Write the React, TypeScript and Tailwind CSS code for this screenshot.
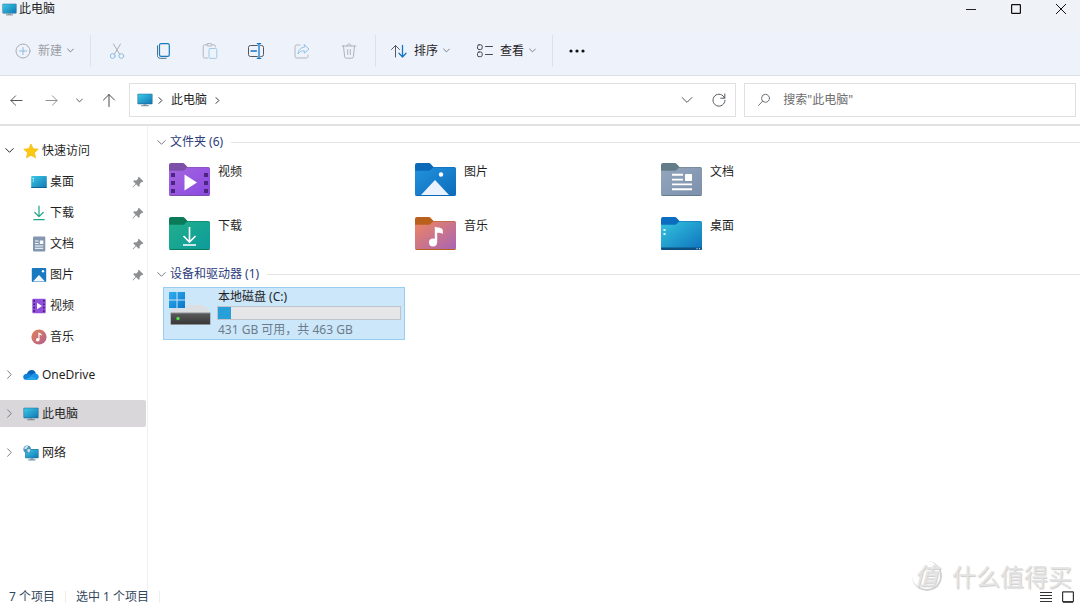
import type { ReactNode } from "react";

type IconProps = { className?: string };

function Chevron({ dir = "down", className = "h-2 w-2" }: { dir?: "down" | "right"; className?: string }) {
  return (
    <svg viewBox="0 0 8 8" className={`shrink-0 ${className}`} fill="none" stroke="currentColor" strokeWidth="1" strokeLinecap="round" strokeLinejoin="round">
      <path vectorEffect="non-scaling-stroke" d={dir === "down" ? "M0.7 2.3 L4 5.6 L7.3 2.3" : "M2.3 0.7 L5.6 4 L2.3 7.3"} />
    </svg>
  );
}

function MonitorIcon({ className = "h-4 w-4" }: IconProps) {
  return (
    <svg viewBox="0 0 16 16" className={`shrink-0 ${className}`}>
      <defs>
        <linearGradient id="screen" x1="0" y1="0" x2="1" y2="1">
          <stop offset="0" stopColor="#3bc9e6" />
          <stop offset="1" stopColor="#1277b4" />
        </linearGradient>
      </defs>
      <rect x="0.5" y="1.8" width="15" height="10.4" rx="0.8" fill="#1b6d96" />
      <rect x="1.1" y="2.3" width="13.8" height="9.3" rx="0.4" fill="url(#screen)" />
      <path d="M6.5 12.2h3v1.2h-3z" fill="#8798a3" />
      <path d="M4.2 13.3h7.6v0.9H4.2z" fill="#5d7886" />
    </svg>
  );
}

function NetworkIcon() {
  return (
    <svg viewBox="0 0 16 16" className="h-4 w-4 shrink-0">
      <rect x="2.2" y="4" width="13.4" height="9.2" rx="0.8" fill="#1b6d96" />
      <rect x="2.8" y="4.5" width="12.2" height="8.2" rx="0.4" fill="url(#screen)" />
      <path d="M7.5 13.2h3v1.2h-3z" fill="#8798a3" />
      <path d="M5.4 14.4h7v1h-7z" fill="#4a7486" />
      <circle cx="4.2" cy="4.2" r="3.8" fill="#4a94bd" />
      <path d="M1 3.2c1-2 3-2.4 4-2 .4 1-1 1.300-1.300 2.300-.5 1-1.700.6-2.700-.3zM4.600 4.300c1.200-.5 2.400 0 2.900.6-.5 1.500-1.400 2.300-2.400 2.500-.6-1-.9-2-.5-3.100z" fill="#cfe6ef" />
    </svg>
  );
}

function StarIcon() {
  return (
    <svg viewBox="0 0 16 16" className="h-4 w-4 shrink-0">
      <path d="M8 1l2.100 4.700 5.100.5-3.800 3.500 1.100 5.100L8 12.200l-4.500 2.600 1.100-5.100L.8 6.200l5.100-.5z" fill="#fcc810" stroke="#f3b50c" strokeWidth="0.700" strokeLinejoin="round" />
    </svg>
  );
}

function CloudIcon() {
  return (
    <svg viewBox="0 0 16 16" className="h-4 w-4 shrink-0">
      <path d="M3.800 7.200C4.600 4.200 7 2.900 9 3.100c2 .2 3.300 1.600 3.800 3.300L9 9.500z" fill="#0a63b8" />
      <path d="M3.600 6.800c1.800-.6 3.200 0 4.400.8l5.500 3.400-2.200 2H3.600C1.600 13 .2 11.600.2 9.900c0-1.700 1.500-3 3.400-3.100z" fill="#1080d8" />
      <path d="M8.400 8.200c1.200-1.400 2.700-2 4.200-1.800 2 .2 3.200 1.700 3.200 3.400 0 1.800-1.300 3.200-3 3.200H5z" fill="#1b93e6" />
      <path d="M2 12.300l6.700-2.900 5.800 3c-.5.400-1.100.6-1.700.6H3.600c-.6 0-1.200-.3-1.600-.7z" fill="#28a8ea" />
    </svg>
  );
}

function DesktopIcon() {
  return (
    <svg viewBox="0 0 16 16" className="h-4 w-4 shrink-0">
      <rect x="0.200" y="2" width="15.600" height="12" rx="1" fill="url(#screen)" />
      <path d="M1.700 4h1.200v1.200H1.700zM1.700 6.400h1.200v1.200H1.700z" fill="#e6fbff" />
      <path d="M.2 12.900h15.600v.3a.8.8 0 0 1-.8.800H1a.8.8 0 0 1-.8-.8z" fill="#11628f" />
    </svg>
  );
}

function DownloadIcon() {
  return (
    <svg viewBox="0 0 16 16" className="h-4 w-4 shrink-0" fill="none" stroke="#21a588" strokeWidth="1.200" strokeLinecap="round" strokeLinejoin="round">
      <path d="M8 1v10.500M3.800 7.500L8 11.700l4.200-4.200M2.800 14.700h10.400" />
    </svg>
  );
}

function DocumentIcon() {
  return (
    <svg viewBox="0 0 16 16" className="h-4 w-4 shrink-0">
      <rect x="2" y="0.500" width="12.300" height="15" rx="1" fill="#8497b0" />
      <path d="M4 5h3.500M4 7.600h3.500M4 10h8.200M4 12.300h8.200" stroke="#fff" strokeWidth="1" />
      <rect x="8.800" y="4.500" width="3.500" height="3.500" fill="#fff" />
    </svg>
  );
}

function PictureIcon() {
  return (
    <svg viewBox="0 0 16 16" className="h-4 w-4 shrink-0">
      <rect x="0.800" y="1" width="14.400" height="14" rx="1" fill="#1878c0" />
      <path d="M2 14.500L8 8l6 6.500z" fill="#f3f8ff" />
      <circle cx="12" cy="4.200" r="1.200" fill="#fff" />
    </svg>
  );
}

function VideoIcon() {
  return (
    <svg viewBox="0 0 16 16" className="h-4 w-4 shrink-0">
      <rect x="1.300" y="0.700" width="13.400" height="14.600" rx="1" fill="#9150dc" />
      <path d="M2.300 2h1.700v1.700H2.300zM2.300 5.400h1.700v1.700H2.300zM2.300 8.800h1.700v1.700H2.300zM2.300 12.200h1.700v1.700H2.300zM12 2h1.700v1.700H12zM12 5.400h1.700v1.700H12zM12 8.800h1.700v1.700H12zM12 12.200h1.700v1.700H12z" fill="#482078" />
      <path d="M6 4.800l5 3.200-5 3.200z" fill="#fff" />
    </svg>
  );
}

function MusicIcon() {
  return (
    <svg viewBox="0 0 16 16" className="h-4 w-4 shrink-0">
      <defs>
        <linearGradient id="disc" x1="0" y1="0" x2="1" y2="1">
          <stop offset="0" stopColor="#e08257" />
          <stop offset="1" stopColor="#b35f8e" />
        </linearGradient>
      </defs>
      <circle cx="8" cy="8" r="7.600" fill="url(#disc)" />
      <circle cx="6.700" cy="10.800" r="1.800" fill="#fff" />
      <path d="M7.400 10.800V3.200c1 1 3 1 3.400 2.600v1.200C10 6 9.300 6 8.500 5.800v5z" fill="#fff" />
    </svg>
  );
}

function PinIcon() {
  return (
    <svg viewBox="0 0 12 12" className="h-3 w-3 shrink-0">
      <path d="M6.800.8l4.600 4.400-.9.800-.9-.1-2 2 .1 2-1 .9-2.500-2.500L1 11.400l-.5-.5L3.600 7.700 1.200 5.300l1-1 2.100.1 1.900-1.900-.2-.9z" fill="#8d9093" />
    </svg>
  );
}

type FolderKind = "video" | "picture" | "document" | "download" | "music" | "desktop";

const folderColors: Record<FolderKind, [string, string, string]> = {
  video: ["#7d4fa8", "#a566e0", "#8a48e0"],
  picture: ["#0a6ab8", "#2392dc", "#0b6cbc"],
  document: ["#637d88", "#93a6bd", "#7d90ac"],
  download: ["#0b7a58", "#20b08a", "#0e9a9c"],
  music: ["#b8601c", "#ee8560", "#a764b6"],
  desktop: ["#0b6cc0", "#35c4de", "#0d72bd"],
};

const folderGlyphs: Record<FolderKind, ReactNode> = {
  video: (
    <>
      <path d="M2 10h4v4H2zM2 18h4v4H2zM2 26h4v4H2zM35 10h4v4h-4zM35 18h4v4h-4zM35 26h4v4h-4z" fill="#4c2582" />
      <path d="M15.500 11.500v16L28 19.500z" fill="#fff" />
    </>
  ),
  picture: (
    <>
      <path d="M6 32L20 17l14 15z" fill="#eaf1ff" />
      <circle cx="26" cy="11.500" r="2.200" fill="#fff" />
    </>
  ),
  document: (
    <>
      <path d="M11 11.800h11M11 16.600h11M11 21.400h20M11 26.200h20" stroke="#fff" strokeWidth="1.900" />
      <rect x="24" y="11" width="7" height="7" rx="0.800" fill="#fff" />
    </>
  ),
  download: <path d="M20.500 10v15M14.500 19l6 6 6-6M14 28h13" fill="none" stroke="#fff" strokeWidth="1.600" />,
  music: (
    <>
      <circle cx="18" cy="25.500" r="4" fill="#fff" />
      <path d="M19.800 25.500V9.500c2.200 1.600 6.600.2 8 3.600v4c-1.600-1.400-3.600-1-5.600-1.300v9.700z" fill="#fff" />
    </>
  ),
  desktop: (
    <>
      <path d="M2.500 12h2v2h-2zM2.500 16h2v2h-2z" fill="#e2fbff" />
      <path d="M0 30.500h41v1a1.500 1.500 0 0 1-1.500 1.500h-38A1.500 1.500 0 0 1 0 31.500z" fill="#0c4f80" />
      <path d="M35.500 31.200h1.200v1h-1.200zM38 31.200h1.200v1H38z" fill="#d8f4ff" />
    </>
  ),
};

function FolderIcon({ kind }: { kind: FolderKind }) {
  const [tab, from, to] = folderColors[kind];
  return (
    <svg viewBox="0 0 41 33" className="h-[33px] w-[41px] shrink-0">
      <defs>
        <linearGradient id={`folder-${kind}`} x1="0" y1="0" x2="1" y2="1">
          <stop offset="0" stopColor={from} />
          <stop offset="1" stopColor={to} />
        </linearGradient>
      </defs>
      <path d="M0 2a2 2 0 0 1 2-2h11.500c1 0 1.500.300 2.200 1L18.500 4H39a2 2 0 0 1 2 2v6H0z" fill={tab} />
      <path d="M0 7.800h13.500c1 0 1.600-.3 2.300-1l1.600-1.600c.5-.5.900-.7 1.600-.7h20A2 2 0 0 1 41 6.500V31a2 2 0 0 1-2 2H2a2 2 0 0 1-2-2z" fill={`url(#folder-${kind})`} />
      <path d="M0 30.900V31a2 2 0 0 0 2 2h37a2 2 0 0 0 2-2v-.1a2 2 0 0 1-2 1.200H2a2 2 0 0 1-2-1.200z" fill={tab} />
      {folderGlyphs[kind]}
    </svg>
  );
}

function DriveIcon() {
  return (
    <svg viewBox="0 0 42 34" className="h-[34px] w-[42px] shrink-0">
      <defs>
        <linearGradient id="win" x1="0" y1="0" x2="1" y2="1">
          <stop offset="0" stopColor="#2fb0ee" />
          <stop offset="1" stopColor="#0b74c8" />
        </linearGradient>
        <linearGradient id="drive" x1="0" y1="0" x2="0" y2="1">
          <stop offset="0" stopColor="#5a5a5a" />
          <stop offset="1" stopColor="#383838" />
        </linearGradient>
      </defs>
      <path d="M5 13h27c2 0 3.300.7 4.600 2.200l4.900 5.800H1.500z" fill="#dcdfe2" />
      <path d="M0 0h16.500v16.500H0z" fill="#cce6fa" />
      <path d="M0 0h7.500v7.500H0zM8.500 0H16v7.500H8.500zM0 8.500h7.500V16H0zM8.500 8.500H16V16H8.500z" fill="url(#win)" />
      <rect x="1.500" y="20.500" width="40" height="12.500" rx="0.800" fill="#8b9094" />
      <rect x="2" y="21.500" width="39" height="10.500" fill="url(#drive)" />
      <circle cx="9" cy="26.500" r="1.700" fill="#4fe04a" />
    </svg>
  );
}

const line = { fill: "none", strokeWidth: 1, strokeLinecap: "round", strokeLinejoin: "round" } as const;

const toolIcons: { label: string; disabled: boolean; icon: ReactNode }[] = [
  {
    label: "剪切",
    disabled: true,
    icon: (
      <g {...line}>
        <path d="M4.500 1l6.300 10.500M11.500 1L5.200 11.500" stroke="#a9adb3" />
        <circle cx="3.700" cy="13" r="2.400" stroke="#8dbfe0" />
        <circle cx="12.300" cy="13" r="2.400" stroke="#8dbfe0" />
      </g>
    ),
  },
  {
    label: "复制",
    disabled: false,
    icon: (
      <g {...line}>
        <rect x="3.500" y="0.700" width="9.800" height="12.600" rx="1.600" stroke="#1879bd" strokeWidth="1.200" />
        <path d="M1.500 2.800v9.700c0 1.700 1 2.800 2.700 2.800h6" stroke="#4c7187" />
      </g>
    ),
  },
  {
    label: "粘贴",
    disabled: true,
    icon: (
      <g {...line}>
        <path d="M5.500 15H2.700A1.500 1.500 0 0 1 1.200 13.500V3.300a1.500 1.500 0 0 1 1.500-1.500H5M10 1.800h1.800a1.500 1.500 0 0 1 1.500 1.500v.7" stroke="#b3b7bc" />
        <rect x="4.800" y="0.600" width="5.200" height="2.400" rx="1.200" stroke="#b3b7bc" />
        <rect x="7" y="5.500" width="7.800" height="9.900" rx="1.200" stroke="#9fcbe4" />
      </g>
    ),
  },
  {
    label: "重命名",
    disabled: false,
    icon: (
      <g {...line}>
        <path d="M9.300 2.500H2.500a2 2 0 0 0-2 2v7a2 2 0 0 0 2 2h6.800M12.700 2.500h.8a2 2 0 0 1 2 2v7a2 2 0 0 1-2 2h-.8" stroke="#50565c" />
        <path d="M9.300.6h3.400M11 .6v14.800M9.300 15.400h3.400M3 8h5.500" stroke="#1476c4" strokeWidth="1.300" />
      </g>
    ),
  },
  {
    label: "共享",
    disabled: true,
    icon: (
      <g {...line}>
        <path d="M6 2H2.700A1.700 1.700 0 0 0 1 3.700v9.600A1.700 1.700 0 0 0 2.700 15h9.600a1.700 1.700 0 0 0 1.700-1.700V12" stroke="#b3b7bc" />
        <path d="M10.300 1.700L15 6l-4.700 4.200V7.800C7.600 7.700 5.800 8.600 4 11c.3-4 2.500-6.500 6.300-6.900z" stroke="#93c2e6" />
      </g>
    ),
  },
  {
    label: "删除",
    disabled: true,
    icon: (
      <g {...line} stroke="#aeb2b8">
        <path d="M1.200 3h13.600M6 2.800c0-2.600 4-2.600 4 0M2.500 3l1.100 10.700a1.700 1.700 0 0 0 1.700 1.500h5.400a1.700 1.700 0 0 0 1.700-1.500L13.500 3M6.700 6.500v5M9.300 6.500v5" />
      </g>
    ),
  },
];

function Divider() {
  return <span className="h-8 w-px shrink-0 bg-[#dde1e8]" />;
}

function ToolMenu({ icon, label, muted }: { icon: ReactNode; label: string; muted?: boolean }) {
  return (
    <button type="button" className={`flex h-8 shrink-0 items-center px-2 ${muted ? "text-[#9a9ea5]" : "text-[#1f2328]"}`}>
      {icon}
      <span className="ml-1.5 mr-[5px]">{label}</span>
      <Chevron className="h-[7px] w-[7px] text-[#7b8087]" />
    </button>
  );
}

const quickItems: { label: string; icon: ReactNode; pinned: boolean }[] = [
  { label: "桌面", icon: <DesktopIcon />, pinned: true },
  { label: "下载", icon: <DownloadIcon />, pinned: true },
  { label: "文档", icon: <DocumentIcon />, pinned: true },
  { label: "图片", icon: <PictureIcon />, pinned: true },
  { label: "视频", icon: <VideoIcon />, pinned: false },
  { label: "音乐", icon: <MusicIcon />, pinned: false },
];

const roots: { label: string; icon: ReactNode; selected: boolean }[] = [
  { label: "OneDrive", icon: <CloudIcon />, selected: false },
  { label: "此电脑", icon: <MonitorIcon />, selected: true },
  { label: "网络", icon: <NetworkIcon />, selected: false },
];

const folders: { label: string; kind: FolderKind }[] = [
  { label: "视频", kind: "video" },
  { label: "图片", kind: "picture" },
  { label: "文档", kind: "document" },
  { label: "下载", kind: "download" },
  { label: "音乐", kind: "music" },
  { label: "桌面", kind: "desktop" },
];

function GroupHeader({ title }: { title: string }) {
  return (
    <h2 className="flex h-5 items-center text-[#2c3c7c]">
      <Chevron className="mr-1 h-[9px] w-[9px] text-[#777c85]" />
      <span>{title}</span>
      <span className="ml-2 h-px flex-1 bg-[#e4e3e6]" />
    </h2>
  );
}

export default function App() {
  const used = ((463 - 431) / 463) * 100;

  return (
    <div className="relative flex min-h-screen flex-col bg-white font-['Noto_Sans','Noto_Sans_CJK_SC',sans-serif] text-xs text-[#1f1f1f]">
      <header className="flex h-8 items-start justify-between bg-[#eff3f8]">
        <div className="flex h-[18px] items-center gap-0.5 pl-0.5">
          <MonitorIcon className="h-[15px] w-[15px]" />
          <h1>此电脑</h1>
        </div>
        <div className="flex h-[18px]">
          <button type="button" aria-label="最小化" className="flex w-[45px] items-center justify-center">
            <svg viewBox="0 0 10 10" className="h-2.5 w-2.5" stroke="#222"><path d="M0 5.500h10" /></svg>
          </button>
          <button type="button" aria-label="最大化" className="flex w-[45px] items-center justify-center">
            <svg viewBox="0 0 10 10" className="h-2.5 w-2.5" fill="none" stroke="#111" strokeWidth="1.200"><rect x="0.600" y="0.600" width="8.800" height="8.800" rx="0.600" /></svg>
          </button>
          <button type="button" aria-label="关闭" className="flex w-[42px] items-center justify-center pl-1">
            <svg viewBox="0 0 10 10" className="h-2.5 w-2.5" stroke="#111"><path d="M0 0l10 10M10 0L0 10" /></svg>
          </button>
        </div>
      </header>

      <div className="flex h-11 items-center border-b border-[#d9dfe3] bg-[#eef2fb] pb-1.5 pl-[7px]">
        <ToolMenu
          muted
          label="新建"
          icon={
            <svg viewBox="0 0 16 16" className="mr-px h-4 w-4" {...line}>
              <circle cx="8" cy="8" r="7" stroke="#a9aeb6" />
              <path d="M8 4.500v7M4.500 8h7" stroke="#8dbbdf" />
            </svg>
          }
        />
        <span className="w-2" />
        <Divider />
        <div className="mx-[3px] flex w-[278px]">
          {toolIcons.map((t) => (
            <button key={t.label} type="button" aria-label={t.label} disabled={t.disabled} className="flex h-8 flex-1 items-center justify-center">
              <svg viewBox="0 0 16 16" className="h-4 w-4 overflow-visible">{t.icon}</svg>
            </button>
          ))}
        </div>
        <Divider />
        <span className="w-1.5" />
        <ToolMenu
          label="排序"
          icon={
            <svg viewBox="0 0 18 16" className="h-4 w-[18px]" {...line}>
              <path d="M5.500 14V2.500M1.500 6.500l4-4 4 4" stroke="#555b61" />
              <path d="M12.500 2.500V14M9 10.300l3.500 3.700 3.500-3.700" stroke="#1476c4" strokeWidth="1.300" />
            </svg>
          }
        />
        <span className="w-2.5" />
        <ToolMenu
          label="查看"
          icon={
            <svg viewBox="0 0 18 16" className="h-4 w-[18px]" {...line} stroke="#464b50">
              <rect x="1.500" y="1.800" width="4.700" height="4.700" rx="1.500" />
              <rect x="1.500" y="9" width="4.700" height="4.700" rx="1.500" />
              <path d="M9.500 3.500h7M9.500 11.500h7" />
            </svg>
          }
        />
        <span className="w-2" />
        <Divider />
        <button type="button" aria-label="更多" className="ml-2 flex h-8 w-8 items-center justify-center">
          <svg viewBox="0 0 16 4" className="h-1 w-4" fill="#111">
            <circle cx="2" cy="2" r="1.600" /><circle cx="8" cy="2" r="1.600" /><circle cx="14" cy="2" r="1.600" />
          </svg>
        </button>
      </div>

      <div className="flex h-[50px] items-center border-b-2 border-[#e2e2e4] pr-1 text-[#55595e]">
        <nav className="flex w-[129px] shrink-0 items-center pl-2">
          <button type="button" aria-label="后退" className="flex w-4 justify-center">
            <svg viewBox="0 0 14 14" className="h-[13px] w-[13px]" {...line} stroke="#45494d"><path d="M13 7H1M6 2L1 7l5 5" /></svg>
          </button>
          <button type="button" aria-label="前进" className="ml-[19px] flex w-4 justify-center">
            <svg viewBox="0 0 14 14" className="h-[13px] w-[13px]" {...line} stroke="#85898d"><path d="M1 7h12M8 2l5 5-5 5" /></svg>
          </button>
          <button type="button" aria-label="最近位置" className="ml-3 flex w-4 justify-center">
            <Chevron className="h-[7px] w-[7px]" />
          </button>
          <button type="button" aria-label="向上" className="ml-3.5 flex w-4 justify-center">
            <svg viewBox="0 0 14 14" className="h-3.5 w-3.5" {...line} stroke="#45494d"><path d="M7 13.500V1.500M1.500 7L7 1.500 12.500 7" /></svg>
          </button>
        </nav>
        <div className="flex h-[34px] flex-[591] items-center border border-[#e2dfe3] pl-[7px] pr-1">
          <MonitorIcon />
          <Chevron dir="right" className="ml-1 h-[7px] w-[7px] text-[#333]" />
          <span className="mx-[7px] text-[#1f1f1f]">此电脑</span>
          <Chevron dir="right" className="h-[7px] w-[7px] text-[#333]" />
          <button type="button" aria-label="展开" className="ml-auto flex h-6 w-6 items-center justify-center">
            <Chevron className="h-3 w-3" />
          </button>
          <button type="button" aria-label="刷新" className="ml-2 flex h-6 w-6 items-center justify-center">
            <svg viewBox="0 0 14 14" className="h-3.5 w-3.5" {...line} stroke="#55595e"><path d="M12.600 5A6 6 0 1 0 13 7.300M12.800 1v4.200H8.700" /></svg>
          </button>
        </div>
        <label className="ml-2 flex h-[34px] flex-[316] items-center border border-[#e2dfe3] pl-3">
          <svg viewBox="0 0 14 14" className="h-3.5 w-3.5 shrink-0" {...line} stroke="#6f7378"><circle cx="8.500" cy="5.300" r="4" /><path d="M5.600 8.200L1.500 12.500" /></svg>
          <input type="search" aria-label="搜索" placeholder={'搜索"此电脑"'} className="ml-3 min-w-0 flex-1 bg-transparent outline-none placeholder:text-[#6d6d6d]" />
        </label>
      </div>

      <div className="flex flex-1">
        <aside className="w-[148px] shrink-0 border-r border-[#f1f0f3] pt-[9px]">
          <button type="button" className="flex h-[31px] w-full items-center pl-[5px]">
            <Chevron className="h-[9px] w-[9px] text-[#222]" />
            <span className="ml-[9px] flex items-center gap-[3px]"><StarIcon /><span className="pt-px">快速访问</span></span>
          </button>
          <ul>
            {quickItems.map((q) => (
              <li key={q.label}>
                <a href="#" className="flex h-[31px] items-center gap-[3px] pl-[31px] pr-[3px]">
                  {q.icon}
                  <span className="flex-1 pt-px">{q.label}</span>
                  {q.pinned && <PinIcon />}
                </a>
              </li>
            ))}
          </ul>
          <ul className="mt-[9px] flex flex-col gap-3">
            {roots.map((r) => (
              <li key={r.label}>
                <a href="#" className={`mr-px flex h-[27px] items-center rounded-r-xs pl-[5px] ${r.selected ? "bg-[#d9d7da]" : ""}`}>
                  <Chevron dir="right" className="mr-[9px] h-[9px] w-[9px] text-[#777c80]" />
                  {r.icon}
                  <span className="ml-[3px] pt-px">{r.label}</span>
                </a>
              </li>
            ))}
          </ul>
        </aside>

        <main className="flex-1 pl-[9px] pt-1.5">
          <section>
            <GroupHeader title="文件夹 (6)" />
            <div className="grid grid-cols-[repeat(auto-fill,246px)] gap-y-2 pb-0.5 pl-3 pt-2.5">
              {folders.map((f) => (
                <a key={f.label} href="#" className="flex h-[46px] items-start gap-2 pt-px">
                  <FolderIcon kind={f.kind} />
                  <span className="pt-px">{f.label}</span>
                </a>
              ))}
            </div>
          </section>
          <section>
            <GroupHeader title="设备和驱动器 (1)" />
            <a href="#" className="ml-1.5 mt-[3px] flex h-[53px] w-[242px] gap-1.5 border border-[#99cdf0] bg-[#cce6fa] py-1 pl-[5px] pr-[3px]">
              <DriveIcon />
              <div className="flex-1">
                <p className="-mt-1 pl-px leading-[18px]">本地磁盘 (C:)</p>
                <div className="mb-px h-3.5 border border-[#bfc4ca] bg-[#e6e6e9]">
                  <div className="h-full bg-[#27a0da]" style={{ width: `${used}%` }} />
                </div>
                <p className="pl-px leading-[18px] text-[#6b7d8b]">431 GB 可用，共 463 GB</p>
              </div>
            </a>
          </section>
        </main>
      </div>

      <footer className="flex h-3 items-center pl-[9px] pr-1.5 leading-3 text-[#33475c]">
        <span>7 个项目</span>
        <span className="mx-2.5 h-3 w-px bg-[#eeeeef]" />
        <span>选中 1 个项目</span>
        <span className="ml-2.5 h-3 w-px bg-[#eeeeef]" />
        <div className="ml-auto flex items-center gap-2.5">
          <button type="button" aria-label="详细信息">
            <svg viewBox="0 0 12 12" className="block h-3 w-3" stroke="#333" strokeWidth="1"><path d="M0 1.500h12M0 4.500h12M0 7.500h12M0 10.500h12" /></svg>
          </button>
          <button type="button" aria-label="大图标">
            <svg viewBox="0 0 12 12" className="block h-3 w-3" fill="none" stroke="#333" strokeWidth="1.200"><rect x="0.600" y="0.800" width="10.800" height="9.800" rx="0.600" /><path d="M1 11h10" strokeWidth="1.600" /></svg>
          </button>
        </div>
      </footer>

      <div className="pointer-events-none absolute bottom-3 right-2 flex items-center gap-2.5 font-['Noto_Sans_CJK_SC',sans-serif] text-2xl leading-7 text-[#e4e4e4] [text-shadow:1px_1px_1px_#cccccc]">
        <span className="flex h-[30px] w-[30px] items-center justify-center rounded-full border-b-2 border-r-2 border-[#d2d2d2] italic">值</span>
        <span>什么值得买</span>
      </div>
    </div>
  );
}
